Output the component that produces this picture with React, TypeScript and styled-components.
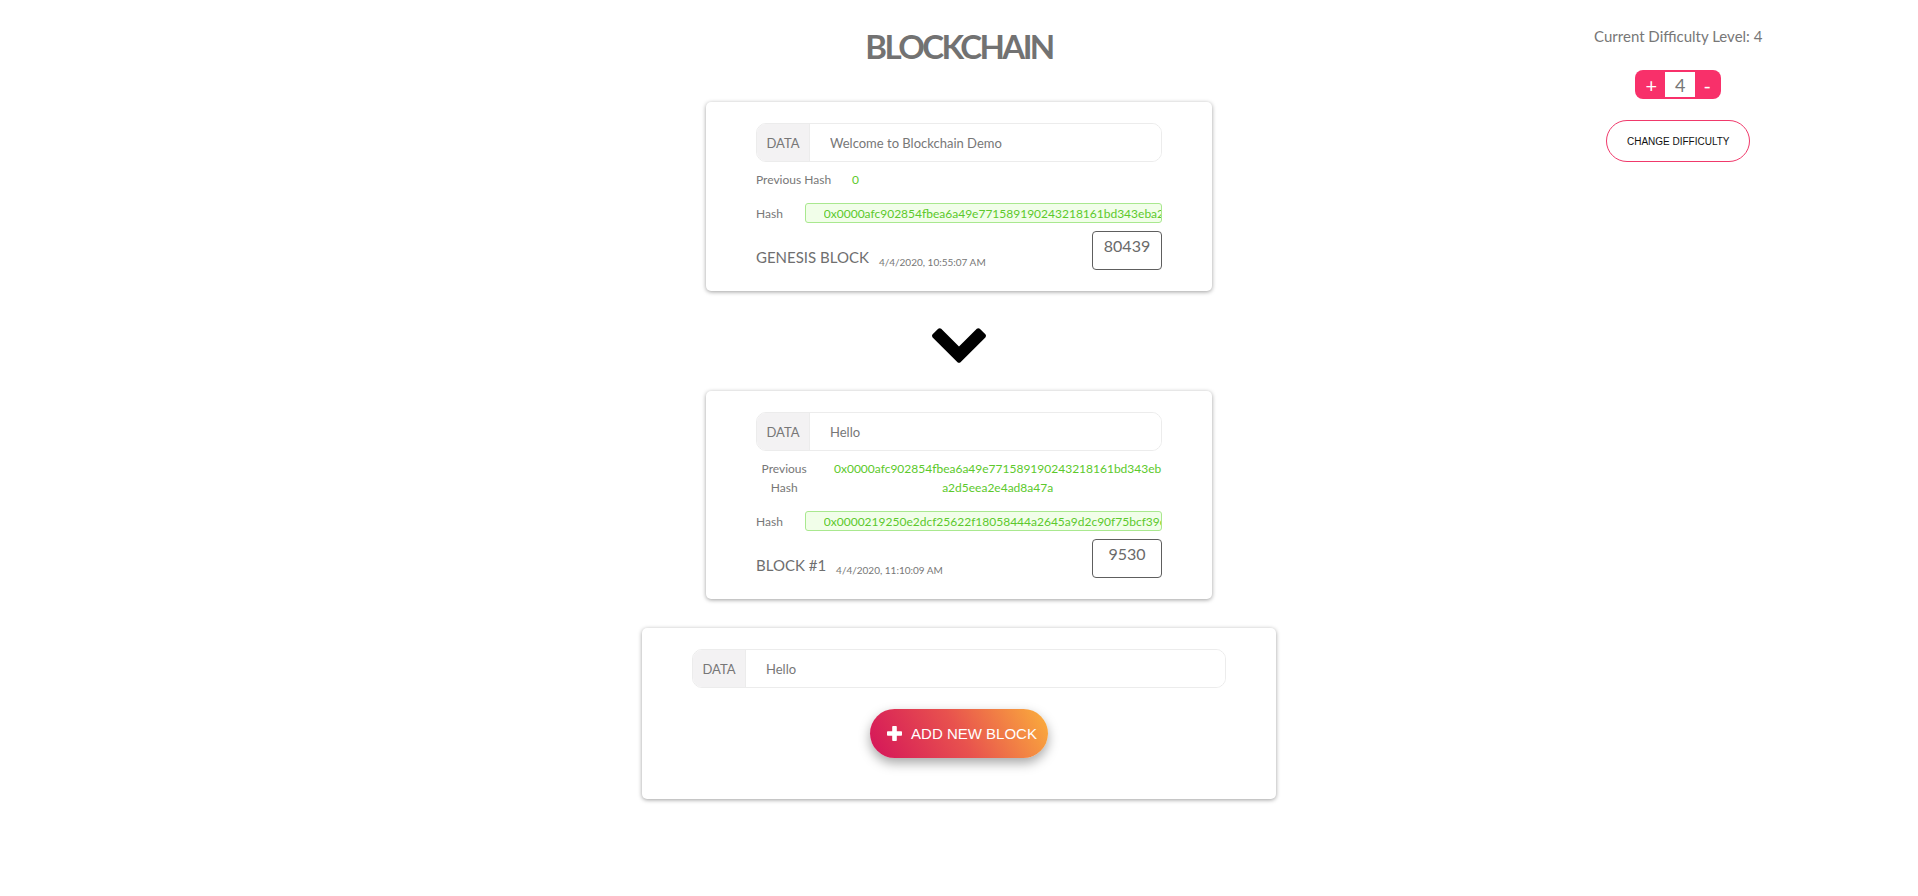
import React from "react";
import styled, { createGlobalStyle } from "styled-components";

const GlobalStyle = createGlobalStyle`
  html, body { margin: 0; padding: 0; background: #ffffff; }
  body { font-family: Lato, "Open Sans", sans-serif; color: #777777; }
  * { box-sizing: border-box; }
`;

const Page = styled.div`
  display: grid;
  grid-template-columns: 1fr 2fr 1fr;
  width: 100%;
  min-height: 896px;
`;

const Main = styled.main`
  grid-column: 2;
  display: flex;
  flex-direction: column;
  align-items: center;
`;

const Title = styled.h1`
  margin: 26px 0 36px;
  font-family: Lato, sans-serif;
  font-weight: 700;
  font-size: 33px;
  line-height: 40px;
  color: #727272;
  letter-spacing: -2.6px;
`;

const Card = styled.section<{ $wide?: boolean }>`
  width: ${(p) => (p.$wide ? "634px" : "506px")};
  padding: 21px 50px ${(p) => (p.$wide ? "41px" : "21px")};
  background: #ffffff;
  border-radius: 5px;
  box-shadow: 0 1px 4px rgba(0, 0, 0, 0.38);
  display: flex;
  flex-direction: column;
`;

const InputGroup = styled.div`
  display: flex;
  height: 39px;
  border: 1px solid #ececec;
  border-radius: 10px;
  overflow: hidden;
`;

const Addon = styled.span`
  flex: 0 0 53px;
  display: flex;
  align-items: center;
  justify-content: center;
  background: #f3f2f3;
  border-right: 1px solid #ececec;
  font-size: 13px;
  color: #777777;
`;

const DataInput = styled.input`
  flex: 1;
  min-width: 0;
  border: none;
  outline: none;
  padding: 0 20px;
  font-family: Lato, sans-serif;
  font-size: 13px;
  color: #777777;
  background: #ffffff;
`;

const PrevRow = styled.div`
  display: flex;
  align-items: flex-start;
  gap: 21px;
  margin-top: 8px;
  font-size: 12px;
  line-height: 19px;
`;

const PrevLabel = styled.span`
  text-align: center;
  color: #777777;
`;

const PrevValue = styled.span`
  text-align: center;
  word-break: break-all;
  color: #5cc92c;
`;

const HashRow = styled.div`
  display: flex;
  align-items: center;
  gap: 22px;
  margin-top: 14px;
  font-size: 12px;
`;

const HashLabel = styled.span`
  color: #777777;
`;

const HashBox = styled.input`
  flex: 1;
  min-width: 0;
  height: 20px;
  padding: 0 0 0 18px;
  border: 1px solid #a9e88f;
  border-radius: 3px;
  background: #f1fee9;
  outline: none;
  font-family: Lato, sans-serif;
  font-size: 12px;
  color: #5cc92c;
`;

const Footer = styled.div`
  display: flex;
  align-items: flex-end;
  justify-content: space-between;
  margin-top: 8px;
`;

const BlockMeta = styled.div`
  display: flex;
  align-items: flex-end;
  gap: 10px;
  margin-bottom: 4px;
`;

const BlockName = styled.span`
  font-size: 15px;
  line-height: 18px;
  color: #6f6f6f;
`;

const Stamp = styled.span`
  margin-bottom: -2px;
  font-size: 10px;
  line-height: 11px;
  color: #777777;
`;

const Nonce = styled.div`
  width: 70px;
  height: 39px;
  padding-top: 5px;
  border: 1px solid #5e5e5e;
  border-radius: 4px;
  text-align: center;
  font-size: 16px;
  line-height: 18px;
  color: #6a6a6a;
`;

const ArrowWrap = styled.div`
  display: flex;
  justify-content: center;
  margin: 37px 0 28px;
  line-height: 0;
`;

const NewCardWrap = styled.div`
  margin-top: 29px;
`;

const AddButton = styled.button`
  align-self: center;
  margin-top: 21px;
  height: 49px;
  padding: 0 11px 0 17px;
  display: flex;
  align-items: center;
  gap: 9px;
  border: none;
  border-radius: 25px;
  background: linear-gradient(60deg, #d4145a 0%, #e8524e 50%, #fbb03b 100%);
  box-shadow: 0 5px 12px rgba(0, 0, 0, 0.35);
  color: #ffffff;
  font-family: "Liberation Sans", Arial, sans-serif;
  font-size: 15px;
  cursor: pointer;
`;

const Side = styled.aside`
  grid-column: 3;
  display: flex;
  flex-direction: column;
  align-items: center;
  padding-top: 27px;
`;

const LevelText = styled.div`
  font-size: 15px;
  line-height: 18px;
  color: #777777;
`;

const Stepper = styled.div`
  margin-top: 25px;
  display: flex;
  align-items: center;
  height: 29px;
  padding: 0 2px;
  border-radius: 8px;
  background: #f8306a;
`;

const StepButton = styled.button<{ $w: number }>`
  width: ${(p) => p.$w}px;
  height: 29px;
  padding: 0;
  border: none;
  background: transparent;
  color: #ffffff;
  font-family: Lato, sans-serif;
  font-size: 20px;
  line-height: 1;
  cursor: pointer;
`;

const StepValue = styled.div`
  width: 30px;
  height: 25px;
  background: #ffffff;
  display: flex;
  align-items: center;
  justify-content: center;
  font-size: 18px;
  color: #777777;
`;

const OutlineButton = styled.button`
  margin-top: 21px;
  width: 144px;
  height: 42px;
  border: 1px solid #f0396b;
  border-radius: 21px;
  background: #ffffff;
  color: #111111;
  font-family: "Liberation Sans", Arial, sans-serif;
  font-size: 10px;
  cursor: pointer;
`;

const Chevron = () => (
  <svg width="54" height="35" viewBox="90 533 1612 1035" aria-hidden="true">
    <path
      fill="#000"
      d="M1683 808l-742 741q-19 19-45 19t-45-19l-742-741q-19-19-19-45.5t19-45.5l166-165q19-19 45-19t45 19l531 531 531-531q19-19 45-19t45 19l166 165q19 19 19 45.5t-19 45.5z"
    />
  </svg>
);

const PlusIcon = () => (
  <svg width="15" height="15" viewBox="0 0 15 15" aria-hidden="true">
    <path
      fill="#fff"
      d="M6 0h3a0.8 0.8 0 0 1 0.8 0.8V5.2H14.2a0.8 0.8 0 0 1 0.8 0.8v3a0.8 0.8 0 0 1-0.8 0.8H9.8v4.4a0.8 0.8 0 0 1-0.8 0.8H6a0.8 0.8 0 0 1-0.8-0.8V9.8H0.8A0.8 0.8 0 0 1 0 9V6a0.8 0.8 0 0 1 0.8-0.8H5.2V0.8A0.8 0.8 0 0 1 6 0z"
    />
  </svg>
);

type Block = {
  name: string;
  data: string;
  prev: string;
  hash: string;
  stamp: string;
  nonce: string;
};

const blocks: Block[] = [
  {
    name: "GENESIS BLOCK",
    data: "Welcome to Blockchain Demo",
    prev: "0",
    hash: "0x0000afc902854fbea6a49e771589190243218161bd343eba2d5eea2e4ad8a47a",
    stamp: "4/4/2020, 10:55:07 AM",
    nonce: "80439",
  },
  {
    name: "BLOCK #1",
    data: "Hello",
    prev: "0x0000afc902854fbea6a49e771589190243218161bd343eba2d5eea2e4ad8a47a",
    hash: "0x0000219250e2dcf25622f18058444a2645a9d2c90f75bcf39e1d0c5a7b3e4f28",
    stamp: "4/4/2020, 11:10:09 AM",
    nonce: "9530",
  },
];

const BlockView = ({ b }: { b: Block }) => (
  <Card>
    <InputGroup>
      <Addon>DATA</Addon>
      <DataInput readOnly value={b.data} />
    </InputGroup>
    <PrevRow>
      <PrevLabel>Previous Hash</PrevLabel>
      <PrevValue>{b.prev}</PrevValue>
    </PrevRow>
    <HashRow>
      <HashLabel>Hash</HashLabel>
      <HashBox readOnly value={b.hash} />
    </HashRow>
    <Footer>
      <BlockMeta>
        <BlockName>{b.name}</BlockName>
        <Stamp>{b.stamp}</Stamp>
      </BlockMeta>
      <Nonce>{b.nonce}</Nonce>
    </Footer>
  </Card>
);

export default function App() {
  return (
    <>
      <GlobalStyle />
      <Page>
        <Main>
          <Title>BLOCKCHAIN</Title>
          {blocks.map((b, i) => (
            <React.Fragment key={b.name}>
              {i > 0 && (
                <ArrowWrap>
                  <Chevron />
                </ArrowWrap>
              )}
              <BlockView b={b} />
            </React.Fragment>
          ))}
          <NewCardWrap>
            <Card $wide>
              <InputGroup>
                <Addon>DATA</Addon>
                <DataInput readOnly value="Hello" />
              </InputGroup>
              <AddButton>
                <PlusIcon />
                ADD NEW BLOCK
              </AddButton>
            </Card>
          </NewCardWrap>
        </Main>
        <Side>
          <LevelText>Current Difficulty Level: 4</LevelText>
          <Stepper>
            <StepButton $w={28}>+</StepButton>
            <StepValue>4</StepValue>
            <StepButton $w={24}>-</StepButton>
          </Stepper>
          <OutlineButton>CHANGE DIFFICULTY</OutlineButton>
        </Side>
      </Page>
    </>
  );
}
